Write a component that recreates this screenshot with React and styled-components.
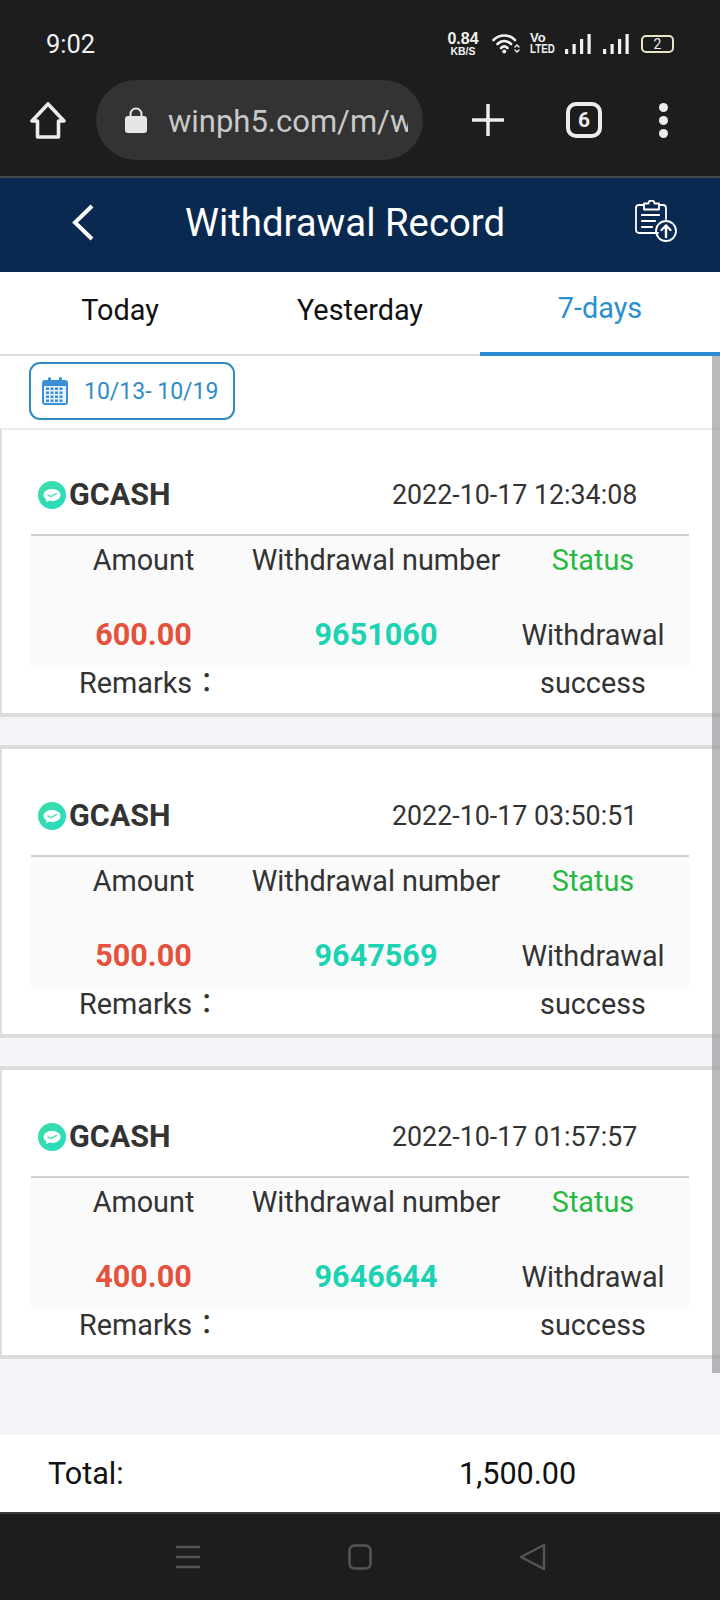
import React from "react";
import styled, { createGlobalStyle } from "styled-components";

const Global = createGlobalStyle`
  html, body { margin: 0; padding: 0; background: #1d1d1d; }
  * { box-sizing: border-box; }
`;

const Screen = styled.div`
  width: 720px;
  height: 1600px;
  display: flex;
  flex-direction: column;
  font-family: Roboto, "Noto Sans CJK TC", "Liberation Sans", sans-serif;
  background: #f3f3f8;
  overflow: hidden;
`;

const Chrome = styled.div`
  height: 178px;
  flex: none;
  background: #1d1d1d;
  border-bottom: 2px solid #454545;
  display: flex;
  flex-direction: column;
`;

const StatusBar = styled.div`
  height: 80px;
  flex: none;
  display: flex;
  align-items: center;
  padding: 7px 46px 0 46px;
  color: #f1f1f1;
`;

const Time = styled.span`
  font-size: 25.5px;
  line-height: 28px;
  flex: 1;
`;

const StatusIcons = styled.div`
  display: flex;
  align-items: center;
`;

const Speed = styled.div`
  width: 34px;
  margin-right: 12px;
  display: flex;
  flex-direction: column;
  align-items: center;
  font-weight: 700;
  font-family: "Liberation Sans", sans-serif;
  white-space: nowrap;
`;

const SpeedValue = styled.span`
  font-size: 16px;
  line-height: 14px;
`;

const SpeedUnit = styled.span`
  font-size: 10.5px;
  line-height: 10px;
`;

const Volte = styled.div`
  width: 24px;
  margin: 0 11px 0 10px;
  display: flex;
  flex-direction: column;
  align-items: flex-start;
  font-weight: 700;
  font-family: "Liberation Sans", sans-serif;
`;

const VolteTop = styled.span`
  font-size: 13px;
  line-height: 12px;
`;

const VolteBottom = styled.span`
  font-size: 12.5px;
  line-height: 11px;
  transform: scaleX(0.78);
  transform-origin: left center;
`;

const SignalIcon = styled.svg`
  display: block;
  margin-right: 12px;
`;

const Battery = styled.div`
  width: 33px;
  height: 18px;
  border: 2px solid #e8e5c4;
  border-radius: 5px;
  display: flex;
  align-items: center;
  justify-content: center;
  font-size: 14px;
  line-height: 14px;
  color: #eee;
  background: #1d1d1d;
`;

const Toolbar = styled.div`
  height: 80px;
  flex: none;
  display: flex;
  align-items: center;
  padding-left: 30px;
`;

const HomeIcon = styled.svg`
  display: block;
  margin-right: 30px;
  flex: none;
`;

const UrlPill = styled.div`
  width: 327px;
  height: 80px;
  flex: none;
  border-radius: 40px;
  background: #333333;
  display: flex;
  align-items: center;
  padding-left: 29px;
  margin-right: 49px;
`;

const LockIcon = styled.svg`
  display: block;
  flex: none;
  margin-right: 21px;
`;

const UrlText = styled.div`
  width: 240px;
  overflow: hidden;
  white-space: nowrap;
  font-size: 31px;
  line-height: 40px;
  padding-top: 3px;
  color: #c9c9c9;
`;

const PlusIcon = styled.svg`
  display: block;
  flex: none;
  margin-right: 62px;
`;

const TabCount = styled.div`
  width: 36px;
  height: 36px;
  flex: none;
  border: 4px solid #ececec;
  border-radius: 10px;
  color: #ececec;
  display: flex;
  align-items: center;
  justify-content: center;
  font-weight: 700;
  font-size: 21px;
  margin-right: 57px;
`;

const Dots = styled.div`
  display: flex;
  flex-direction: column;
  gap: 4px;
`;

const Dot = styled.span`
  width: 9px;
  height: 9px;
  border-radius: 50%;
  background: #ececec;
`;

const Header = styled.header`
  height: 94px;
  flex: none;
  background: #0a2950;
  display: flex;
  align-items: center;
  padding: 0 43px 5px 71px;
  color: #fff;
`;

const BackIcon = styled.svg`
  display: block;
  flex: none;
  margin-right: 90px;
`;

const Title = styled.h1`
  margin: 0;
  flex: 1;
  font-weight: 400;
  font-size: 38.3px;
  line-height: 44px;
  white-space: nowrap;
`;

const UploadIcon = styled.svg`
  display: block;
  flex: none;
  margin-bottom: 4px;
`;

const Tabs = styled.nav`
  height: 84px;
  flex: none;
  display: grid;
  grid-template-columns: repeat(3, 1fr);
  background: #fff;
`;

const Tab = styled.div`
  display: flex;
  align-items: center;
  justify-content: center;
  padding-bottom: 8px;
  font-size: 28.8px;
  color: ${(p) => (p.$active ? "#2c8fd0" : "#111")};
  border-bottom: ${(p) => (p.$active ? "4px solid #2b8bd6" : "2px solid #dcdcdc")};
  padding-top: ${(p) => (p.$active ? "0" : "2px")};
`;

const Main = styled.main`
  flex: 1;
  position: relative;
`;

const Scrollbar = styled.div`
  position: absolute;
  top: 0;
  right: 0;
  width: 8px;
  height: 1017px;
  background: rgba(150, 150, 150, 0.66);
`;

const FilterBar = styled.div`
  height: 72px;
  background: #fff;
  padding: 6px 0 0 29px;
`;

const DateButton = styled.div`
  width: 206px;
  height: 58px;
  border: 2px solid #2f8cc0;
  border-radius: 11px;
  display: flex;
  align-items: center;
  padding-left: 11px;
  gap: 16px;
  font-size: 23px;
  color: #2f8cc6;
  white-space: nowrap;
`;

const CalendarIcon = styled.svg`
  display: block;
  flex: none;
`;

const Card = styled.article`
  height: ${(p) => (p.$first ? "289px" : "293px")};
  margin-bottom: 28px;
  background: #fff;
  border-top: ${(p) => (p.$first ? "2px solid #ececec" : "4px solid #dcdcdc")};
  border-bottom: 4px solid #dcdcdc;
  border-left: 2px solid #dcdcdc;
`;

const CardHead = styled.div`
  margin: 0 31px 0 29px;
  padding-top: ${(p) => (p.$first ? "40px" : "42px")};
  height: ${(p) => (p.$first ? "106px" : "108px")};
  display: flex;
  align-items: flex-start;
  border-bottom: 2px solid #cfcfcf;
`;

const Brand = styled.div`
  width: 361px;
  padding-left: 7px;
  display: flex;
  align-items: center;
  gap: 3px;
  font-weight: 700;
  font-size: 30.5px;
  line-height: 50px;
  color: #333;
`;

const BrandLogo = styled.svg`
  display: block;
  flex: none;
`;

const Stamp = styled.div`
  font-size: 26.8px;
  line-height: 50px;
  color: #333;
  white-space: nowrap;
`;

const Panel = styled.div`
  margin: 0 31px 0 29px;
  height: 131px;
  background: #fafafa;
  display: grid;
  grid-template-columns: 225px 240px 194px;
  grid-template-rows: 75px 48px;
  text-align: center;
  font-size: 28.8px;
  line-height: 48px;
  color: #333;
`;

const Cell = styled.div`
  display: flex;
  justify-content: center;
  white-space: nowrap;
`;

const StatusHead = styled.div`
  color: #27b83f;
`;

const Amount = styled.div`
  font-weight: 700;
  font-size: 30.6px;
  color: #e4513c;
`;

const Reference = styled.div`
  font-weight: 700;
  font-size: 30.6px;
  color: #1bd3b2;
`;

const StatusText = styled.div`
  color: #333;
`;

const Remarks = styled.div`
  margin-left: 35px;
  width: 226px;
  text-align: center;
  font-size: 28.8px;
  line-height: 32px;
  color: #333;
  white-space: nowrap;
`;

const Footer = styled.div`
  height: 77px;
  flex: none;
  background: #fff;
  display: flex;
  padding-left: 48px;
  align-items: center;
  font-size: 30.6px;
  color: #111;
`;

const FooterLabel = styled.span`
  width: 411px;
`;

const FooterValue = styled.span`
  white-space: nowrap;
`;

const NavBar = styled.div`
  height: 88px;
  flex: none;
  background: #1d1d1d;
  border-top: 2px solid #3a3a3a;
  display: flex;
  align-items: center;
  padding: 0 0 0 175px;
  gap: 147px;
`;

const NavIcon = styled.svg`
  display: block;
  flex: none;
`;

function Gcash() {
  return (
    <BrandLogo width="28" height="28" viewBox="0 0 28 28">
      <defs>
        <linearGradient id="gc" x1="0" y1="0" x2="1" y2="1">
          <stop offset="0" stopColor="#3fdca6" />
          <stop offset="1" stopColor="#25dcc0" />
        </linearGradient>
      </defs>
      <circle cx="14" cy="14" r="14" fill="url(#gc)" />
      <path d="M5.500 14c0-3.500 3.800-6 8.500-6s8.500 2.500 8.500 6-3.800 6-8.500 6c-1 0-2-.1-2.800-.4L8 21l.3-2.800C6.400 17.200 5.500 15.700 5.500 14z" fill="#fff" />
      <path d="M10 14l2.800 1.600L18.500 12.500" fill="none" stroke="#5fe0bd" strokeWidth="1.600" strokeLinecap="round" />
    </BrandLogo>
  );
}

const records = [
  { time: "2022-10-17 12:34:08", amount: "600.00", id: "9651060" },
  { time: "2022-10-17 03:50:51", amount: "500.00", id: "9647569" },
  { time: "2022-10-17 01:57:57", amount: "400.00", id: "9646644" },
];

function Signal() {
  return (
    <SignalIcon width="26" height="20" viewBox="0 0 26 20" fill="#f1f1f1">
      <rect x="0" y="15" width="3.200" height="5" />
      <rect x="7.500" y="10" width="3.200" height="10" />
      <rect x="15" y="5" width="3.200" height="15" />
      <rect x="22.500" y="0" width="3.200" height="20" />
    </SignalIcon>
  );
}

export default function App() {
  return (
    <Screen>
      <Global />
      <Chrome>
        <StatusBar>
          <Time>9:02</Time>
          <StatusIcons>
            <Speed>
              <SpeedValue>0.84</SpeedValue>
              <SpeedUnit>KB/S</SpeedUnit>
            </Speed>
            <svg width="28" height="21" viewBox="0 0 28 21" fill="none" stroke="#f1f1f1" strokeWidth="2.600" strokeLinecap="round">
              <path d="M1.500 7C7.500 1 17 1 23 7" />
              <path d="M5.500 11c4-4 9.500-4 13.500 0" />
              <path d="M9 15c2-2 4.500-2 6.500 0" />
              <circle cx="12.200" cy="18.500" r="2" fill="#f1f1f1" stroke="none" />
              <path d="M24 14l2-2 2 2M24 17l2 2 2-2" strokeWidth="1.400" transform="translate(-1 0)" />
            </svg>
            <Volte>
              <VolteTop>Vo</VolteTop>
              <VolteBottom>LTED</VolteBottom>
            </Volte>
            <Signal />
            <Signal />
            <Battery>2</Battery>
          </StatusIcons>
        </StatusBar>
        <Toolbar>
          <HomeIcon width="36" height="37" viewBox="0 0 36 37" fill="none" stroke="#ececec" strokeWidth="3.600" strokeLinejoin="round">
            <path d="M18 2L2 19h5.500v16h21V19H34z" />
          </HomeIcon>
          <UrlPill>
            <LockIcon width="22" height="26" viewBox="0 0 22 26">
              <path d="M5.500 11V7a5.500 5.500 0 0 1 11 0v4" fill="none" stroke="#e6e6e6" strokeWidth="2" />
              <rect x="0" y="9" width="22" height="17" rx="3" fill="#e6e6e6" />
            </LockIcon>
            <UrlText>winph5.com/m/withdrawal</UrlText>
          </UrlPill>
          <PlusIcon width="32" height="32" viewBox="0 0 32 32" stroke="#ececec" strokeWidth="3.500" strokeLinecap="round">
            <path d="M16 1v30M1 16h30" />
          </PlusIcon>
          <TabCount>6</TabCount>
          <Dots>
            <Dot />
            <Dot />
            <Dot />
          </Dots>
        </Toolbar>
      </Chrome>
      <Header>
        <BackIcon width="24" height="37" viewBox="0 0 24 37" fill="none" stroke="#fff" strokeWidth="4">
          <path d="M21 2L4 18.500 21 35" />
        </BackIcon>
        <Title>Withdrawal Record</Title>
        <UploadIcon width="42" height="42" viewBox="0 0 42 42" fill="none" stroke="#fff" strokeWidth="1.800" strokeLinecap="round" strokeLinejoin="round">
          <path d="M23 33H4a3 3 0 0 1-3-3V8a3 3 0 0 1 3-3h5M24 5h4a3 3 0 0 1 3 3v11" />
          <path d="M9 3.500h4.500a3 3 0 0 1 6 0H24v6H9z" />
          <path d="M7 15h17M7 21h13M7 27h10" strokeWidth="2.200" />
          <circle cx="31" cy="31" r="10" />
          <path d="M31 37V25.500M26.500 30l4.500-4.500 4.500 4.500" strokeWidth="2.400" />
        </UploadIcon>
      </Header>
      <Tabs>
        <Tab>Today</Tab>
        <Tab>Yesterday</Tab>
        <Tab $active>7-days</Tab>
      </Tabs>
      <Main>
        <FilterBar>
          <DateButton>
            <CalendarIcon width="26" height="28" viewBox="0 0 26 28">
              <path d="M3 3h20a3 3 0 0 1 3 3v19a3 3 0 0 1-3 3H3a3 3 0 0 1-3-3V6a3 3 0 0 1 3-3z" fill="#3b8fd9" />
              <rect x="2" y="9" width="22" height="17" fill="#e7f2fb" />
              <rect x="6" y="0" width="3" height="6" rx="1.500" fill="#3b8fd9" />
              <rect x="17" y="0" width="3" height="6" rx="1.500" fill="#3b8fd9" />
              {[11, 15, 19, 23].map((y) =>
                [4, 8.500, 13, 17.500].map((x) => <rect key={`${x}-${y}`} x={x} y={y - 0.5} width="3" height="2.500" fill="#3b8fd9" />)
              )}
            </CalendarIcon>
            10/13- 10/19
          </DateButton>
        </FilterBar>
        {records.map((r, i) => (
          <Card key={r.id} $first={i === 0}>
            <CardHead $first={i === 0}>
              <Brand>
                <Gcash />
                GCASH
              </Brand>
              <Stamp>{r.time}</Stamp>
            </CardHead>
            <Panel>
              <Cell>Amount</Cell>
              <Cell>Withdrawal number</Cell>
              <StatusHead>Status</StatusHead>
              <Amount>{r.amount}</Amount>
              <Reference>{r.id}</Reference>
              <StatusText>Withdrawal success</StatusText>
            </Panel>
            <Remarks>Remarks：</Remarks>
          </Card>
        ))}
        <Scrollbar />
      </Main>
      <Footer>
        <FooterLabel>Total:</FooterLabel>
        <FooterValue>1,500.00</FooterValue>
      </Footer>
      <NavBar>
        <NavIcon width="26" height="24" viewBox="0 0 26 24" stroke="#555" strokeWidth="2.500">
          <path d="M1 2h24M1 12h24M1 22h24" />
        </NavIcon>
        <NavIcon width="24" height="26" viewBox="0 0 24 26" fill="none" stroke="#555" strokeWidth="2.500">
          <rect x="1.500" y="1.500" width="21" height="23" rx="5" />
        </NavIcon>
        <NavIcon width="28" height="28" viewBox="0 0 28 28" fill="none" stroke="#555" strokeWidth="2.500" strokeLinejoin="round">
          <path d="M25 2L2 14l23 12z" />
        </NavIcon>
      </NavBar>
    </Screen>
  );
}
